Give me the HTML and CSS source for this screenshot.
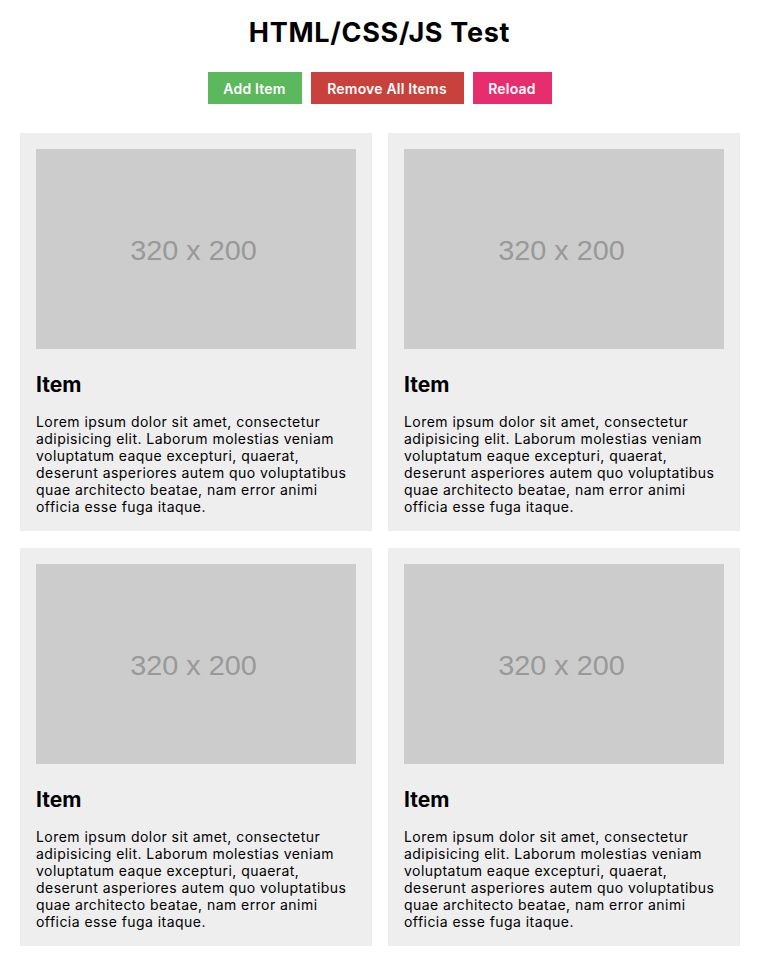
FILE: index.html
```html
<!DOCTYPE html>
<html>
<head>
<meta charset="utf-8">
<title>HTML/CSS/JS Test</title>
<link rel="stylesheet" href="styles.css">
</head>
<body>
<h1 class="title">HTML/CSS/JS Test</h1>
<div class="toolbar">
  <button class="btn btn-add">Add Item</button>
  <button class="btn btn-remove">Remove All Items</button>
  <button class="btn btn-reload">Reload</button>
</div>
<div class="grid">
  <div class="card">
    <div class="thumb"><span class="thumb-label">320 x 200</span></div>
    <h2 class="card-title">Item</h2>
    <p class="card-text">Lorem ipsum dolor sit amet, consectetur adipisicing elit. Laborum molestias veniam voluptatum eaque excepturi, quaerat, deserunt asperiores autem quo voluptatibus quae architecto beatae, nam error animi officia esse fuga itaque.</p>
  </div>
  <div class="card">
    <div class="thumb"><span class="thumb-label">320 x 200</span></div>
    <h2 class="card-title">Item</h2>
    <p class="card-text">Lorem ipsum dolor sit amet, consectetur adipisicing elit. Laborum molestias veniam voluptatum eaque excepturi, quaerat, deserunt asperiores autem quo voluptatibus quae architecto beatae, nam error animi officia esse fuga itaque.</p>
  </div>
  <div class="card">
    <div class="thumb"><span class="thumb-label">320 x 200</span></div>
    <h2 class="card-title">Item</h2>
    <p class="card-text">Lorem ipsum dolor sit amet, consectetur adipisicing elit. Laborum molestias veniam voluptatum eaque excepturi, quaerat, deserunt asperiores autem quo voluptatibus quae architecto beatae, nam error animi officia esse fuga itaque.</p>
  </div>
  <div class="card">
    <div class="thumb"><span class="thumb-label">320 x 200</span></div>
    <h2 class="card-title">Item</h2>
    <p class="card-text">Lorem ipsum dolor sit amet, consectetur adipisicing elit. Laborum molestias veniam voluptatum eaque excepturi, quaerat, deserunt asperiores autem quo voluptatibus quae architecto beatae, nam error animi officia esse fuga itaque.</p>
  </div>
</div>
</body>
</html>
```
FILE: styles.css
```css
html, body {
  margin: 0;
  padding: 0;
  background: #fff;
}
body {
  font-family: Inter, "Noto Sans", sans-serif;
  color: #000;
  padding: 0 19px 12px 20px;
}
.title {
  margin: 0;
  padding-top: 16px;
  font-size: 27px;
  line-height: 34px;
  font-weight: 700;
  text-align: center;
  letter-spacing: 0.7px;
}
.toolbar {
  display: flex;
  justify-content: center;
  gap: 9px;
  margin-top: 22px;
}
.btn {
  border: 0;
  height: 32px;
  padding: 0;
  font-family: Inter, "Noto Sans", sans-serif;
  font-size: 14px;
  font-weight: 600;
  letter-spacing: 0.2px;
  color: #fff;
  cursor: pointer;
}
.btn-add { background: #5cb85c; width: 94px; }
.btn-remove { background: #c9413d; width: 153px; }
.btn-reload { background: #e62e6e; width: 79px; }
.grid {
  display: grid;
  grid-template-columns: 1fr 1fr;
  gap: 17px 16px;
  margin-top: 29px;
}
.card {
  background: #eee;
  padding: 16px;
}
.thumb {
  width: 320px;
  height: 200px;
  background: #ccc;
  display: flex;
  align-items: center;
  justify-content: center;
}
.thumb-label {
  color: #999;
  font-family: "Liberation Sans", Arial, sans-serif;
  font-size: 28px;
  line-height: 32px;
  display: inline-block;
  transform: translate(-3px, 2px) scaleX(1.03);
}
.card-title {
  margin: 23px 0 0;
  font-size: 21px;
  line-height: 25px;
  font-weight: 700;
}
.card-text {
  margin: 16px 0 0;
  font-size: 14px;
  line-height: 17px;
  letter-spacing: 0.45px;
}
```
